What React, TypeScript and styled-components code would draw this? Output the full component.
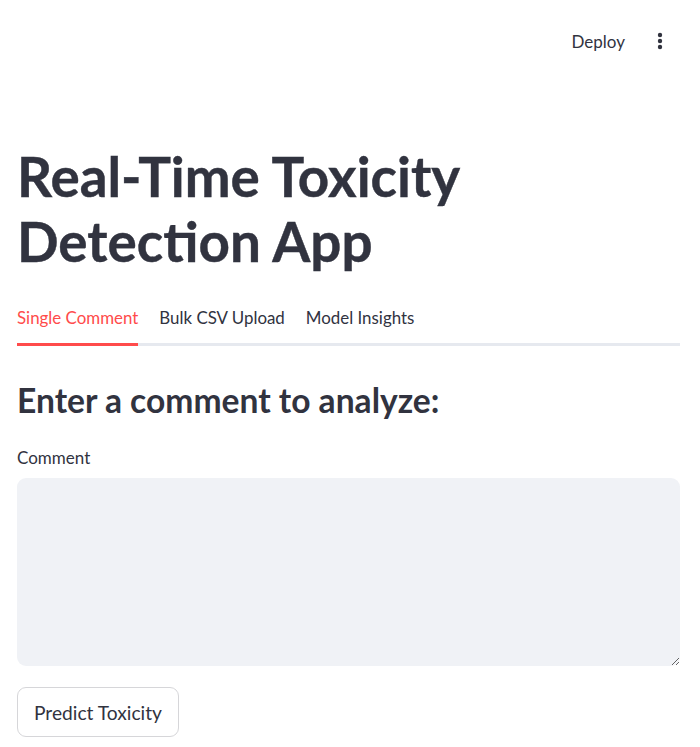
import React from "react";
import styled, { createGlobalStyle } from "styled-components";

const Global = createGlobalStyle`
  html, body { margin: 0; padding: 0; background: #ffffff; }
  body { font-family: "Lato", "Noto Sans", sans-serif; color: #31333f; overflow: hidden; }
  * { box-sizing: border-box; }
`;

const Page = styled.div`
  width: 700px;
  height: 747px;
  display: flex;
  flex-direction: column;
`;

const Header = styled.header`
  height: 82px;
  display: flex;
  align-items: center;
  justify-content: flex-end;
  padding: 0 30px 0 0;
  gap: 15px;
`;

const DeployButton = styled.button`
  border: none;
  background: transparent;
  font-family: inherit;
  font-size: 17px;
  color: #31333f;
  padding: 6px 10px;
  cursor: pointer;
`;

const MenuButton = styled.button`
  border: none;
  background: transparent;
  padding: 0;
  width: 20px;
  height: 24px;
  display: flex;
  align-items: center;
  justify-content: center;
  color: #31333f;
`;

const Main = styled.main`
  padding: 62px 20px 0 17px;
  display: flex;
  flex-direction: column;
`;

const Title = styled.h1`
  margin: 0;
  font-size: 54.8px;
  font-weight: 700;
  line-height: 65px;
  color: #31333f;
  -webkit-text-stroke: 0.4px #31333f;
`;

const TabList = styled.div`
  margin-top: 33px;
  display: flex;
  gap: 21px;
  border-bottom: 3px solid #e6e9ef;
`;

const Tab = styled.button<{ $active?: boolean }>`
  border: none;
  background: transparent;
  padding: 0 0 15px;
  margin-bottom: -3px;
  font-family: inherit;
  font-size: 16.9px;
  color: ${(p) => (p.$active ? "#ff4b4b" : "#31333f")};
  border-bottom: 3px solid ${(p) => (p.$active ? "#ff4b4b" : "transparent")};
  cursor: pointer;
`;

const SubHeading = styled.h2`
  margin: 30px 0 0;
  font-size: 33.6px;
  font-weight: 700;
  line-height: 48px;
  color: #31333f;
`;

const Label = styled.label`
  margin-top: 22px;
  font-size: 17px;
  line-height: 24px;
  color: #31333f;
`;

const TextArea = styled.textarea`
  margin-top: 8px;
  width: 100%;
  height: 188px;
  border: none;
  border-radius: 9px;
  background: #f0f2f6;
  padding: 14px;
  font-family: inherit;
  font-size: 17px;
  outline: none;
  resize: vertical;
`;

const Button = styled.button`
  margin-top: 21px;
  align-self: flex-start;
  height: 50px;
  padding: 0 16px;
  border: 1px solid #d6d6d9;
  border-radius: 9px;
  background: #ffffff;
  font-family: inherit;
  font-size: 19.2px;
  color: #31333f;
  cursor: pointer;
`;

export default function App() {
  return (
    <Page>
      <Global />
      <Header>
        <DeployButton>Deploy</DeployButton>
        <MenuButton aria-label="menu">
          <svg width="6" height="18" viewBox="0 0 6 18">
            <circle cx="3" cy="3" r="2.2" fill="#31333f" />
            <circle cx="3" cy="9" r="2.2" fill="#31333f" />
            <circle cx="3" cy="15" r="2.2" fill="#31333f" />
          </svg>
        </MenuButton>
      </Header>
      <Main>
        <Title>
          Real-Time Toxicity
          <br />
          Detection App
        </Title>
        <TabList>
          <Tab $active>Single Comment</Tab>
          <Tab>Bulk CSV Upload</Tab>
          <Tab>Model Insights</Tab>
        </TabList>
        <SubHeading>Enter a comment to analyze:</SubHeading>
        <Label>Comment</Label>
        <TextArea aria-label="Comment" />
        <Button>Predict Toxicity</Button>
      </Main>
    </Page>
  );
}
